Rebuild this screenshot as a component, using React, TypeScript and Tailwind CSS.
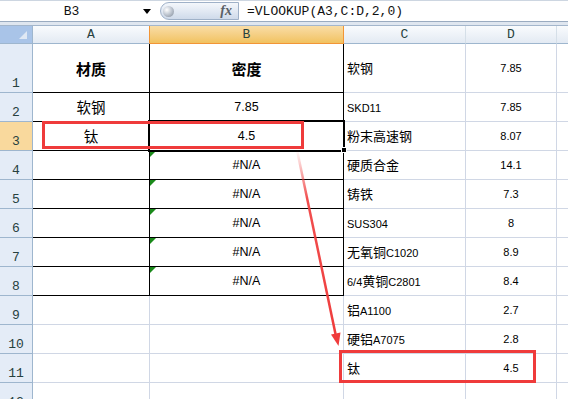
import React from "react";

type Row = { a?: string; b?: string; c?: string; d?: string };

const ROWS: Row[] = [
  { a: "材质", b: "密度", c: "软钢", d: "7.85" },
  { a: "软钢", b: "7.85", c: "SKD11", d: "7.85" },
  { a: "钛", b: "4.5", c: "粉末高速钢", d: "8.07" },
  { b: "#N/A", c: "硬质合金", d: "14.1" },
  { b: "#N/A", c: "铸铁", d: "7.3" },
  { b: "#N/A", c: "SUS304", d: "8" },
  { b: "#N/A", c: "无氧铜C1020", d: "8.9" },
  { b: "#N/A", c: "6/4黄铜C2801", d: "8.4" },
  { c: "铝A1100", d: "2.7" },
  { c: "硬铝A7075", d: "2.8" },
  { c: "钛", d: "4.5" },
  {},
];

function splitRuns(s: string) {
  const runs: { t: string; cjk: boolean }[] = [];
  for (const ch of s) {
    const cjk = /[\u3000-\u9fff]/.test(ch);
    const last = runs[runs.length - 1];
    if (last && last.cjk === cjk) last.t += ch;
    else runs.push({ t: ch, cjk });
  }
  return runs;
}

function MixedText({ s }: { s: string }) {
  return (
    <span className="whitespace-nowrap">
      {splitRuns(s).map((r, i) =>
        r.cjk ? (
          <span key={i} className="text-[13px] font-['Noto_Sans_CJK_SC',sans-serif]">
            {r.t}
          </span>
        ) : (
          <span key={i} className="text-[11px] font-['Liberation_Sans',sans-serif]">
            {r.t}
          </span>
        )
      )}
    </span>
  );
}

export default function App() {
  return (
    <div className="relative w-[568px] h-[399px] overflow-hidden bg-white font-['Liberation_Sans',sans-serif] text-black">
      {/* Formula bar */}
      <div className="flex h-[22px] border-t border-b border-t-[#cdd6e1] border-b-[#9aabc0] bg-white">
        <div className="flex w-[158px] items-center">
          <div className="w-[143px] text-center font-['Liberation_Mono',monospace] text-[13px] leading-none text-[#111]">
            B3
          </div>
          <div className="h-0 w-0 border-l-[4px] border-r-[4px] border-t-[5px] border-l-transparent border-r-transparent border-t-black" />
        </div>
        <div className="ml-[2px] mt-[1px] flex h-[18px] w-[79px] items-center rounded-l-full border border-[#9fb1c8] bg-gradient-to-b from-[#f4f7fb] via-[#e2e9f3] to-[#cfdaea]">
          <div className="ml-[2px] h-[11px] w-[11px] rounded-full bg-[radial-gradient(circle_at_35%_35%,#ffffff,#c3cad4_45%,#7d8796)]" />
          <div className="ml-auto mr-[6px] font-['Liberation_Serif',serif] text-[14px] font-bold italic leading-none text-[#5a5f66]">
            fx
          </div>
        </div>
        <div className="flex items-center pl-[8px] font-['Liberation_Mono',monospace] text-[13px] leading-none text-[#111]">
          =VLOOKUP(A3,C:D,2,0)
        </div>
      </div>
      <div className="h-[3px] bg-[#dfe6ef]" />

      {/* Column headers */}
      <div className="flex h-[19px] border-t border-[#a3b6cc]">
        <div className="relative h-[18px] w-[33px] shrink-0 border-b border-r border-[#9eb6ce] bg-[#a9c4e8]">
          <div className="absolute left-[19px] top-[5px] h-[8px] w-[8px] bg-[#dfe8f4] [clip-path:polygon(100%_0,100%_100%,0_100%)]" />
        </div>
        <div className="flex h-[18px] w-[117px] shrink-0 items-center justify-center border-b border-r border-b-[#9eb6ce] border-r-[#f29536] bg-gradient-to-b from-[#f9fbfd] to-[#e3eaf3] font-['Liberation_Mono',monospace] text-[13px] leading-none text-[#27413e]">
          A
        </div>
        <div className="flex h-[18px] w-[194px] shrink-0 items-center justify-center border-b border-r border-[#f29536] bg-gradient-to-b from-[#f9dda6] to-[#f1c25f] font-['Liberation_Mono',monospace] text-[13px] leading-none text-[#27413e]">
          B
        </div>
        <div className="flex h-[18px] w-[122px] shrink-0 items-center justify-center border-b border-r border-b-[#9eb6ce] border-r-[#d5dfe8] bg-gradient-to-b from-[#f9fbfd] to-[#e3eaf3] font-['Liberation_Mono',monospace] text-[13px] leading-none text-[#27413e]">
          C
        </div>
        <div className="flex h-[18px] w-[91px] shrink-0 items-center justify-center border-b border-r border-b-[#9eb6ce] border-r-[#d5dfe8] bg-gradient-to-b from-[#f9fbfd] to-[#e3eaf3] font-['Liberation_Mono',monospace] text-[13px] leading-none text-[#27413e]">
          D
        </div>
        <div className="h-[18px] flex-1 border-b border-[#9eb6ce] bg-gradient-to-b from-[#f9fbfd] to-[#e3eaf3]" />
      </div>

      {/* Rows */}
      {ROWS.map((r, i) => {
        const n = i + 1;
        const inTable = n <= 8;
        const tall = n === 1;
        const sel = n === 3;
        return (
          <div key={n} className={tall ? "flex h-[49px]" : "flex h-[29px]"}>
            <div
              className={
                sel
                  ? "flex w-[33px] shrink-0 items-end justify-center border-b border-r border-[#9eb6ce] bg-[#f9d99d] pb-[1px] font-['Liberation_Mono',monospace] text-[13px] leading-[14px] text-[#27413e]"
                  : "flex w-[33px] shrink-0 items-end justify-center border-b border-r border-[#9eb6ce] bg-[#e4ecf7] pb-[1px] font-['Liberation_Mono',monospace] text-[13px] leading-[14px] text-[#27413e]"
              }
            >
              {n}
            </div>
            <div
              className={
                inTable
                  ? "flex w-[117px] shrink-0 items-center justify-center border-b border-r border-black"
                  : "flex w-[117px] shrink-0 items-center justify-center border-b border-r border-[#d0d7e5]"
              }
            >
              {r.a && (
                <span
                  className={
                    tall
                      ? "font-['Noto_Sans_CJK_SC',sans-serif] text-[15px] font-bold leading-none"
                      : "font-['Noto_Sans_CJK_SC',sans-serif] text-[14.5px] leading-none"
                  }
                >
                  {r.a}
                </span>
              )}
            </div>
            <div
              className={
                inTable
                  ? "relative flex w-[194px] shrink-0 items-center justify-center border-b border-r border-black"
                  : "relative flex w-[194px] shrink-0 items-center justify-center border-b border-r border-[#d0d7e5]"
              }
            >
              {n >= 4 && n <= 8 && (
                <div className="absolute left-0 top-0 h-[6px] w-[6px] bg-[#1a8a1a] [clip-path:polygon(0_0,100%_0,0_100%)]" />
              )}
              {r.b &&
                (tall ? (
                  <span className="font-['Noto_Sans_CJK_SC',sans-serif] text-[15px] font-bold leading-none">
                    {r.b}
                  </span>
                ) : (
                  <span className="font-['Liberation_Sans',sans-serif] text-[12.5px] leading-none">{r.b}</span>
                ))}
            </div>
            <div className="flex w-[122px] shrink-0 items-center border-b border-r border-[#d0d7e5] pl-[3px] leading-none">
              {r.c && <MixedText s={r.c} />}
            </div>
            <div className="flex w-[91px] shrink-0 items-center justify-center border-b border-r border-[#d0d7e5] text-[11px] leading-none">
              {r.d}
            </div>
            <div className="flex-1 border-b border-[#d0d7e5]" />
          </div>
        );
      })}

      {/* Selection of B3 */}
      <div className="pointer-events-none absolute left-[148px] top-[120px] h-[32px] w-[197px] border-2 border-black" />
      <div className="pointer-events-none absolute left-[341px] top-[147px] h-[6px] w-[6px] border border-white bg-black" />

      {/* Red annotations */}
      <div className="pointer-events-none absolute left-[42px] top-[121px] h-[28px] w-[262px] border-[3px] border-[#ef3b3b]" />
      <div className="pointer-events-none absolute left-[339px] top-[350px] h-[33px] w-[197px] border-[3px] border-[#ef3b3b]" />
      <svg className="pointer-events-none absolute left-0 top-0" width="568" height="399" viewBox="0 0 568 399">
        <defs>
          <linearGradient id="fade" gradientUnits="userSpaceOnUse" x1="297" y1="150" x2="338" y2="346">
            <stop offset="0" stopColor="#ef3b3b" stopOpacity="0" />
            <stop offset="0.25" stopColor="#ef3b3b" stopOpacity="0.9" />
            <stop offset="1" stopColor="#ef3b3b" stopOpacity="1" />
          </linearGradient>
        </defs>
        <line x1="297" y1="150" x2="335.5" y2="334" stroke="url(#fade)" strokeWidth="2.5" />
        <polygon points="338.5,346 340.5,332.5 331,334.5" fill="#ef3b3b" />
      </svg>
    </div>
  );
}
